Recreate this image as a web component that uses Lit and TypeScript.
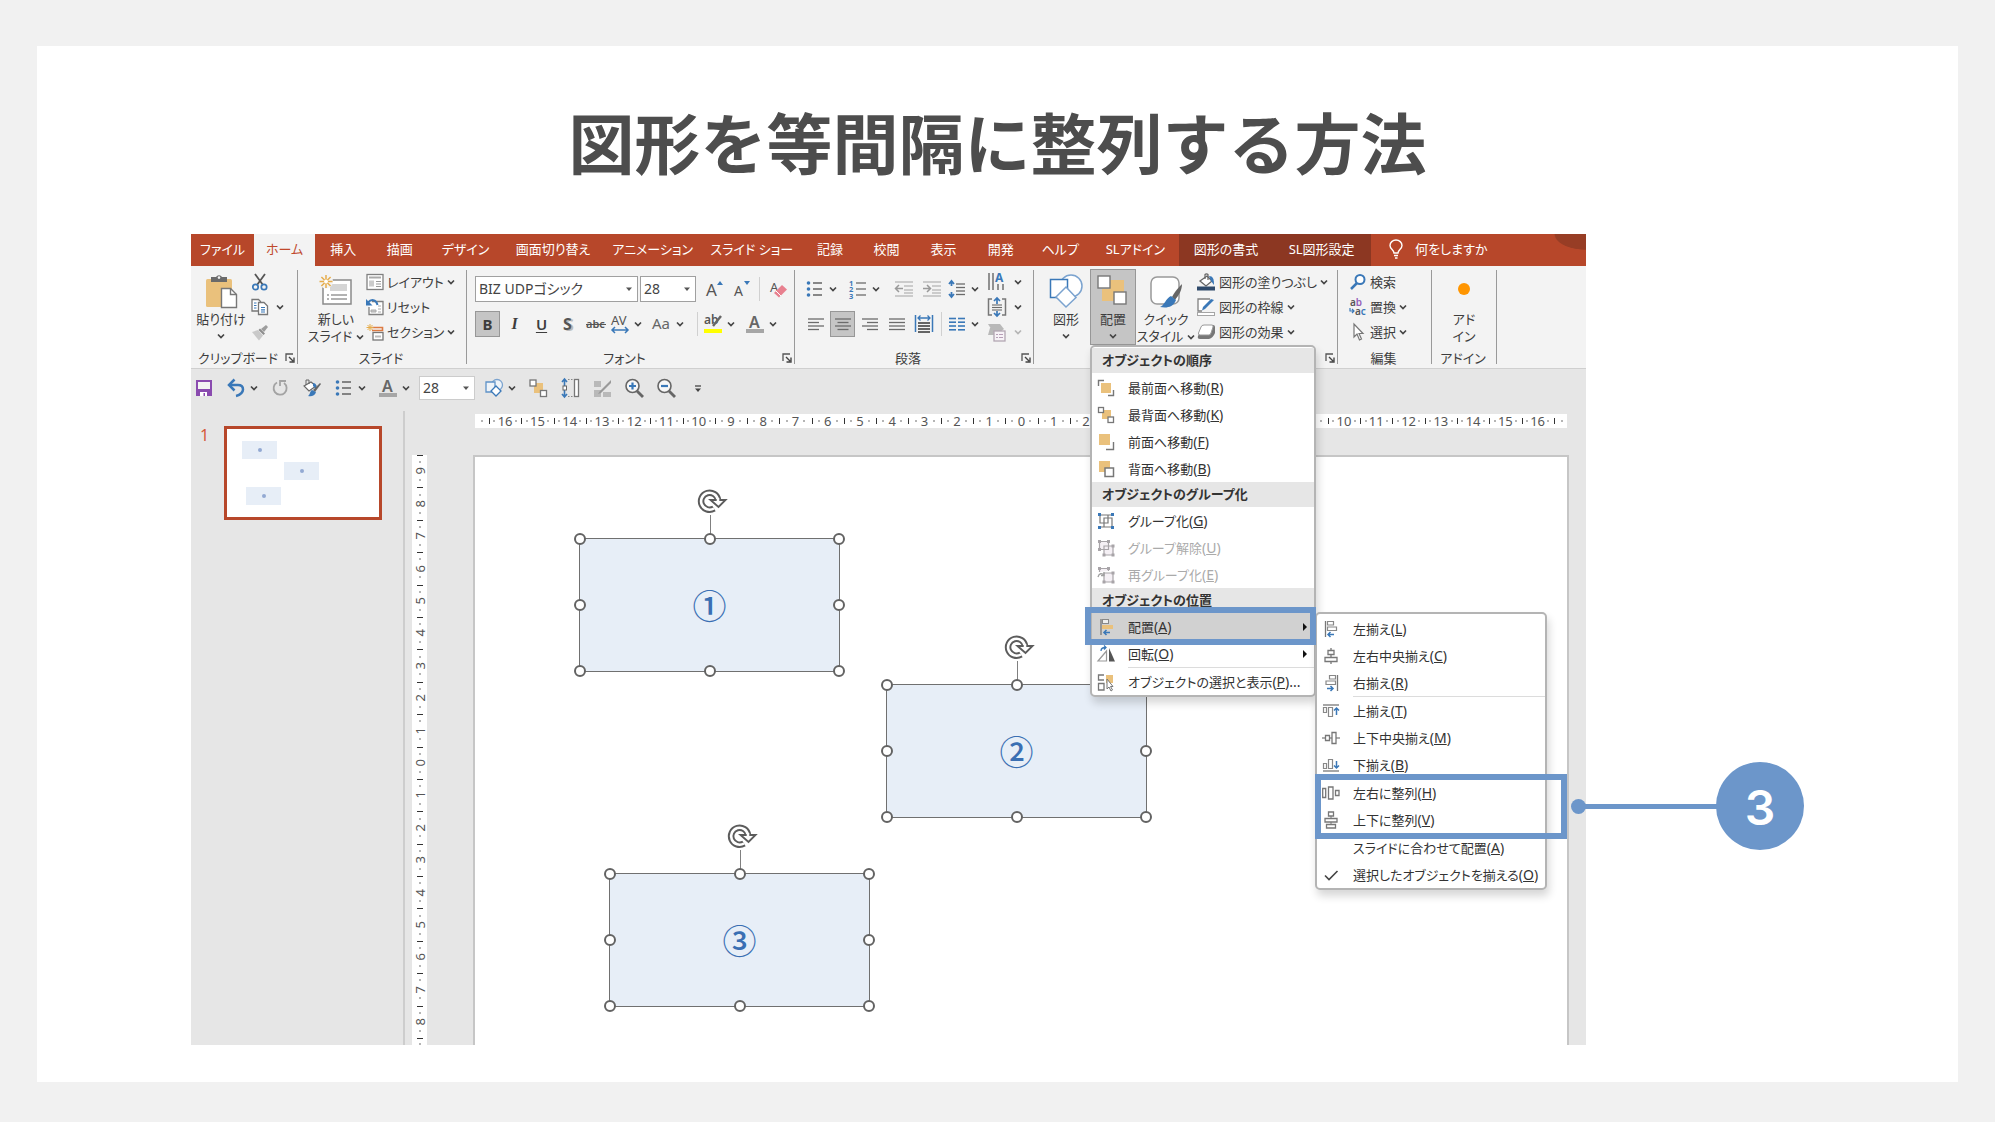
import { LitElement, html, css, svg, nothing, TemplateResult, SVGTemplateResult } from "lit";
import { customElement, property } from "lit/decorators.js";
import { classMap } from "lit/directives/class-map.js";

const G = "#6b6b6b";
const B = "#3a78b8";
const T = "#eac17c";

/* Horizontal strokes, given as [x1, x2, y] triples. */
const bars = (color: string, rows: number[][], w = 1.6) =>
  rows.map(([a, b, y]) => svg`<path d="M${a} ${y}H${b}" stroke=${color} stroke-width=${w} fill="none"/>`);

const art: Record<string, [number, number, SVGTemplateResult | SVGTemplateResult[]]> = {
  paste: [34, 34, svg`
    <rect x="2" y="5" width="26" height="28" rx="1.5" fill=${T}/>
    <path d="M7 3h5a3.4 3.4 0 0 1 6 0h5v5H7z" fill="#6a6a6a"/><circle cx="15" cy="3.6" r="1.3" fill="#f3f3f3"/>
    <path d="M17.500 14.500h9l6 6v13h-15z" fill="#fff" stroke="#777" stroke-width="1.4"/>
    <path d="M26.500 14.500v6h6" fill="none" stroke="#777" stroke-width="1.400"/>`],
  cut: [18, 18, svg`
    <path d="M4 1l8 11M14 1L6 12" stroke="#555" stroke-width="1.8" fill="none"/>
    <circle cx="4.500" cy="14" r="2.7" fill="none" stroke=${B} stroke-width="1.700"/>
    <circle cx="13" cy="14" r="2.700" fill="none" stroke=${B} stroke-width="1.700"/>`],
  copy: [18, 18, svg`
    <path d="M1 1.500h6.500l2 2V13H1z" fill="#fff" stroke="#777" stroke-width="1.300"/>
    <path d="M7.500 4.500H13l3.500 3.500v8.500h-9z" fill="#fff" stroke="#777" stroke-width="1.300"/>
    <path d="M3 5h2.500M3 7.500h2.500M3 10h2.500M10 9.500h4M10 11.800h4M10 14h4" stroke=${B} stroke-width="1.200"/>`],
  brush: [18, 18, svg`
    <path d="M10 6l5-4 2 2-4 5z" fill="#9d9d9d"/><path d="M9 5.500l5 5-1.500 1.500-5-5z" fill="#8d8d8d"/>
    <path d="M1 9l6-2 5 5.500-4 5z" fill="#c9c9c9"/>`],
  newslide: [34, 34, svg`
    <rect x="4" y="6" width="28" height="24" fill="#fff" stroke="#8a8a8a" stroke-width="1.500"/>
    <rect x="11" y="10" width="17" height="7" fill="#d5d5d5"/>
    <path d="M8 21h2M12 21h16M8 25h2M12 25h16" stroke="#999" stroke-width="1.300"/>
    <circle cx="7" cy="7.500" r="7" fill="#f3f3f3"/>
    <path d="M7 1v13M.5 7.500h13M2.400 3l9.200 9M11.600 3L2.400 12" stroke="#e6ad4c" stroke-width="1.500"/>
    <circle cx="7" cy="7.500" r="2" fill="#fff"/>`],
  layout: [18, 18, svg`
    <rect x="1" y="1.500" width="16" height="15" fill="#fff" stroke="#808080" stroke-width="1.300"/>
    <path d="M3 4.500h12" stroke="#aaa" stroke-width="2"/><rect x="3" y="7.500" width="5" height="6" fill="#ccc"/>
    <path d="M10 8.500h5M10 11h5M10 13.500h5" stroke="#999"/>`],
  reset: [18, 18, svg`
    <path d="M6 3.500h11v13H3V9" fill="#fff" stroke="#808080" stroke-width="1.300"/>
    <path d="M5 12h5v2H5zM12 8h3M12 11h3M12 14h3" stroke="#aaa" fill="#ccc"/>
    <path d="M2 4.500c3-3.500 8-3.500 9.500 2.500" stroke=${B} stroke-width="2" fill="none"/><path d="M0 1v6.500h6.500z" fill=${B}/>`],
  section: [18, 18, svg`
    <path d="M6 4.500h10.500v3H6" stroke="#dd7b43" stroke-width="1.600" fill="none"/>
    <rect x="7" y="9.500" width="10" height="7.500" fill="#fff" stroke="#777" stroke-width="1.300"/>
    <path d="M9 12.500h6v2H9z" fill="#bbb"/><path d="M4 1v7M.5 4.500h7M1.500 2l5 5M6.500 2l-5 5" stroke="#e6ad4c"/>`],
  grow: [20, 20, svg`<text x="1" y="17" font-size="17" fill="#555">A</text><path d="M12 6l3-4 3 4z" fill=${B}/>`],
  shrink: [20, 20, svg`<text x="2" y="17" font-size="14" fill="#555">A</text><path d="M12 2l3 4 3-4z" fill=${B}/>`],
  eraser: [20, 20, svg`<text x="2" y="13" font-size="13" fill="#555">A</text>
    <path d="M6 14l8-8 5 4.500-8 8z" fill="#e8808f"/><path d="M8 12l5 5" stroke="#fff"/>`],
  shadow: [20, 20, svg`<text x="6" y="17" font-size="16" font-weight="700" fill="#bbb">S</text><text x="4" y="16" font-size="16" font-weight="700" fill="#555">S</text>`],
  strike: [20, 20, svg`<text x="0" y="14" font-size="11" font-weight="600" fill="#555">abc</text><path d="M0 10.500h20" stroke="#555"/>`],
  spacing: [20, 20, svg`<text x="1" y="11" font-size="13" fill="#555">AV</text>
    <path d="M3 16h14M5 13l-3 3 3 3M15 13l3 3-3 3" stroke=${B} stroke-width="1.500" fill="none"/>`],
  caseAa: [20, 20, svg`<text x="0" y="15" font-size="15" fill="#666">Aa</text>`],
  marker: [20, 20, svg`<text x="1" y="10" font-size="12" font-weight="600" fill="#555">ab</text>
    <path d="M18 2l-8 10" stroke="#666" stroke-width="2.400"/><rect x="1" y="15" width="18" height="4" fill="#ffff00"/>`],
  fontcolor: [20, 20, svg`<text x="4" y="14" font-size="16" font-weight="600" fill="#666">A</text><rect x="1" y="15" width="18" height="4" fill="#a6a6a6"/>`],
  bullets: [20, 20, svg`<g fill=${B}><circle cx="3.500" cy="4" r="1.800"/><circle cx="3.500" cy="10" r="1.800"/><circle cx="3.500" cy="16" r="1.800"/></g>
    ${bars(G, [[8, 17, 4], [8, 17, 10], [8, 17, 16]])}`],
  numbers: [20, 20, svg`<g fill=${B} font-size="7.500" font-weight="700"><text x="1" y="6.500">1</text><text x="1" y="13">2</text><text x="1" y="19.500">3</text></g>
    ${bars(G, [[8, 18, 4], [8, 18, 10], [8, 18, 16]], 1.3)}`],
  outdent: [20, 20, svg`${bars("#b5b5b5", [[1, 19, 3], [10, 19, 7], [10, 19, 11], [10, 19, 14], [1, 19, 17]], 1.3)}
    <path d="M9 9.500H2M5 6L1.500 9.500 5 13" stroke="#999" stroke-width="1.500" fill="none"/>`],
  indent: [20, 20, svg`${bars("#b5b5b5", [[1, 19, 3], [10, 19, 7], [10, 19, 11], [10, 19, 14], [1, 19, 17]], 1.3)}
    <path d="M1 9.500h7M5 6l3.500 3.500L5 13" stroke="#999" stroke-width="1.500" fill="none"/>`],
  linespace: [20, 20, svg`${bars(G, [[9, 18, 5], [9, 18, 8.5], [9, 18, 12], [9, 18, 15.500]], 1.3)}
    <path d="M4.500 3v4M4.500 13v4M2 5l2.500-3L7 5M2 15l2.500 3L7 15" stroke=${B} stroke-width="1.800" fill="none"/>`],
  left: [20, 20, bars(G, [[2, 18, 5], [2, 13, 8.5], [2, 18, 12], [2, 13, 15.500]], 1.3)],
  center: [20, 20, bars(G, [[2, 18, 5], [4.5, 15.5, 8.5], [2, 18, 12], [4.5, 15.5, 15.500]], 1.3)],
  right: [20, 20, bars(G, [[2, 18, 5], [7, 18, 8.5], [2, 18, 12], [7, 18, 15.500]], 1.3)],
  justify: [20, 20, bars(G, [[2, 18, 5], [2, 18, 8.5], [2, 18, 12], [2, 18, 15.500]], 1.3)],
  distribute: [20, 20, svg`<path d="M1.500 1v17M18.500 1v17" stroke=${B} stroke-width="1.500"/>
    <path d="M4 4h12M6.500 1.500L4 4l2.500 2.500M13.500 1.500L16 4l-2.500 2.500" stroke=${B} stroke-width="1.300" fill="none"/>
    ${bars("#555", [[4, 16, 9], [4, 16, 12], [4, 16, 15], [4, 16, 18]], 1.800)}`],
  columns: [20, 20, bars(B, [[2, 9, 4.5], [11, 18, 4.5], [2, 9, 8.2], [11, 18, 8.2], [2, 9, 12], [11, 18, 12], [2, 9, 15.800], [11, 18, 15.800]], 1.600)],
  textdir: [20, 20, svg`<path d="M2 1v17M6 1v17M11 12v6M16 12v6" stroke="#666" stroke-width="1.400"/><text x="8" y="10" font-size="12" font-weight="700" fill=${B}>A</text>`],
  aligntext: [20, 20, svg`<path d="M5 2H1.500v16H5M15 2h3.500v16H15" fill="none" stroke="#777" stroke-width="1.500"/>
    ${bars(G, [[5, 15, 8], [5, 15, 10.500], [5, 15, 13]], 1.100)}
    <path d="M10 1v6M7 4l3-3 3 3M10 14v5M7 16l3 3 3-3" stroke=${B} stroke-width="1.700" fill="none"/>`],
  smartart: [20, 20, svg`<path d="M1 2h12l4 5-4 3H6z" fill="#b9b9b9"/><path d="M3 6h5v7H1z" fill="#b9b9b9"/><rect x="7" y="9" width="11" height="10" fill="#f7f2f7" stroke="#b3a6b3" stroke-width="1.300"/>
    <path d="M9 12.500h2M12 12.500h4M9 15.500h2M12 15.500h4" stroke="#b79fb7"/>`],
  shapes: [34, 34, svg`<circle cx="22" cy="12" r="11" fill="#fff" stroke="#7ba3cf" stroke-width="1.500"/>
    <rect x="1.500" y="5.500" width="17" height="18" fill="#fff" stroke=${B} stroke-width="1.500"/>
    <path d="M17 13l10 10.500L17 33 7 23z" fill="#fff" stroke="#7ba3cf" stroke-width="1.500"/>`],
  arrange: [34, 34, svg`<rect x="13" y="6" width="15" height="15" fill=${T}/><rect x="6" y="15" width="12" height="12" fill=${T}/>
    <rect x="2" y="2" width="12" height="12" fill="#fff" stroke="#777" stroke-width="1.400"/>
    <rect x="18" y="18" width="12" height="12" fill="#fff" stroke="#777" stroke-width="1.400"/>`],
  quick: [34, 34, svg`<rect x="2" y="3" width="28" height="27" rx="6" fill="#fff" stroke="#999" stroke-width="1.500"/>
    <path d="M33 10c-2 2-7 7-10 13l3 3c4-5 7-10 7-16z" fill="#666"/><path d="M22 22l5 4c-3 8-10 8-16 7 4-1 6-9 11-11z" fill=${B}/>`],
  fill: [20, 20, svg`<path d="M4 9l7-5 5 5-6 5z" fill="#fff" stroke="#666" stroke-width="1.300"/><path d="M9 7V2.500a2 2 0 0 1 3 0V8" fill="none" stroke="#666" stroke-width="1.200"/>
    <path d="M13 4c4 0 5 3 5 9l-3-4z" fill=${B}/><rect x="1" y="14.500" width="18" height="4" fill="#2f4a6b"/>`],
  outline: [20, 20, svg`<path d="M14 2H2v12h4" fill="#fff" stroke="#808080" stroke-width="1.300"/><path d="M18 3l-9 9-3 1.500 1-3.500 8-8z" fill=${B}/>
    <rect x="1.500" y="15.500" width="17" height="3" fill="#fff" stroke="#a5a5a5"/>`],
  effect: [20, 20, svg`<path d="M8 3h9q2 0 2 2v6q-2 5-6 6H4q-3 0-2-3z" fill="#777"/><path d="M8 3h8q1.500 0 1 2l-2 6q-.5 2-2 2H4q-2 0-1.500-2L5 5q.5-2 3-2z" fill="#fff" stroke="#999"/>`],
  find: [18, 18, svg`<circle cx="11" cy="6.500" r="4.500" fill="#fff" stroke=${B} stroke-width="2"/><path d="M8 10l-6 6" stroke=${B} stroke-width="2.500"/>`],
  replace: [18, 18, svg`<text x="1" y="8" font-size="10" font-weight="600" fill="#555">a<tspan fill="#9460b8">b</tspan></text>
    <text x="6" y="17" font-size="10" font-weight="600" fill="#555">a<tspan fill=${B}>c</tspan></text><path d="M1 10v3h4M3 11l2 2-2 2" stroke=${B} stroke-width="1.200" fill="none"/>`],
  select: [18, 18, svg`<path d="M5 1v13l3-3 2.500 6 2-1-2.500-5.500h4z" fill="#fff" stroke="#777" stroke-width="1.200"/>`],
  addin: [34, 34, svg`<circle cx="17" cy="15" r="6" fill="#ff9500"/>`],
  bulb: [18, 20, svg`<path d="M7 14c0-3-4-4-4-7.500a6 5.500 0 0 1 12 0c0 3.500-4 4.500-4 7.500zM7 16.500h4M8 19h2.500" fill="none" stroke="#fff" stroke-width="1.400"/>`],
  save: [20, 20, svg`<path d="M3 3h14v14H3z" fill="#f3f3f3" stroke="#8a4baf" stroke-width="2"/><path d="M3 11h14v6H3z" fill="#8a4baf"/><path d="M6 14h7v4H6z" fill="#fff"/><path d="M9.500 15h1.500v3H9.500z" fill="#8a4baf"/>`],
  undo: [20, 20, svg`<path d="M3 7h9c4 0 5 2.500 5 4.500S15 17 10 18" fill="none" stroke=${B} stroke-width="2.500"/><path d="M8.500 1.500L3 7l5.500 5.500" fill="none" stroke=${B} stroke-width="2.500"/>`],
  redo: [20, 20, svg`<path d="M7 4.500a6.500 6.500 0 1 0 7 .5M10 2v6M10 3h6" fill="none" stroke="#a3a3a3" stroke-width="1.800"/>`],
  paint: [20, 20, svg`<path d="M2 8l7-4 5 4-7 5z" fill="#fff" stroke="#666" stroke-width="1.200"/><path d="M4 7V2h3v4" fill="none" stroke="#666"/>
    <path d="M11 5c3 0 4 3 3 6l-3-3z" fill=${B}/><path d="M19 6l-6 8-2-2 7-7z" fill="#666"/><path d="M10 12l4 2c-1 4-5 5-8 4 2-1 2-5 4-6z" fill=${B}/>`],
  shapesS: [20, 20, svg`<circle cx="13" cy="7" r="5.500" fill="#eef3f8" stroke="#7ba3cf" stroke-width="1.300"/><path d="M2 4h9v10H2z" fill="#eef3f8" stroke="#5f93c8" stroke-width="1.300"/>
    <path d="M12 8l5 5-5 5-5-5z" fill="#fff" stroke=${B} stroke-width="1.300"/>`],
  arrangeS: [20, 20, svg`<rect x="6" y="5" width="9" height="10" fill=${T}/><rect x="2" y="2" width="6" height="6" fill="#fff" stroke="#777" stroke-width="1.300"/><rect x="12.500" y="12.500" width="6" height="6" fill="#fff" stroke="#777" stroke-width="1.300"/>`],
  heightS: [20, 20, svg`<path d="M4.500 1v18M2 4l2.500-3L7 4M2 16l2.500 3L7 16" stroke=${B} stroke-width="1.600" fill="none"/><rect x="3" y="8" width="3.500" height="4" fill="#fff" stroke="#666"/>
    <path d="M8 1.500h6M8 18.500h6" stroke="#888" stroke-dasharray="1.500"/><rect x="14.500" y="1.500" width="4" height="17" fill="#fff" stroke="#777" stroke-width="1.300"/>`],
  penS: [20, 20, svg`<path d="M2 3h7v6H2zM2 12h7v7H2zM11 14h8v5h-8z" fill="#b9b9b9"/><path d="M19 2L8 13l-2 3 3-1L19 5z" fill="#9a9a9a"/>`],
  zoomIn: [20, 20, svg`<circle cx="8.500" cy="8" r="6.500" fill="#f7f7f7" stroke="#666" stroke-width="1.600"/><path d="M13 13l6 6" stroke="#666" stroke-width="2.800"/><path d="M8.500 4.500v7M5 8h7" stroke=${B} stroke-width="2.200"/>`],
  zoomOut: [20, 20, svg`<circle cx="8.500" cy="8" r="6.500" fill="#f7f7f7" stroke="#666" stroke-width="1.600"/><path d="M13 13l6 6" stroke="#666" stroke-width="2.800"/><path d="M5 8h7" stroke=${B} stroke-width="2.200"/>`],
  more: [20, 20, svg`<path d="M7 8h6" stroke="#444" stroke-width="1.300"/><path d="M7 10.500h6l-3 3.500z" fill="#444"/>`],
  launcher: [10, 10, svg`<path d="M1 8V1h7" fill="none" stroke="#555" stroke-width="1.300"/><path d="M4 4l4 4M9 4.500V9H4.500" fill="none" stroke="#444" stroke-width="1.400"/>`],
  chev: [8, 8, svg`<path d="M1 2.500l3 3 3-3" fill="none" stroke="#444" stroke-width="1.700"/>`],
  chevOff: [8, 8, svg`<path d="M1 2.500l3 3 3-3" fill="none" stroke="#b5b5b5" stroke-width="1.700"/>`],
  drop: [8, 8, svg`<path d="M1 2.500h6l-3 3.500z" fill="#555"/>`],
  flyout: [8, 10, svg`<path d="M2 1l4 4-4 4z" fill="#111"/>`],
  toFront: [18, 18, svg`<rect x="4" y="4" width="10" height="10" fill=${T}/><path d="M1.500 7V1.500H7M16.500 11v5.500H11" fill="none" stroke="#777" stroke-width="1.400"/>`],
  toBack: [18, 18, svg`<rect x="5" y="4" width="9" height="9" fill=${T}/><rect x="1.500" y="1.500" width="5" height="5" fill="#fff" stroke="#777" stroke-width="1.300"/><rect x="11" y="11" width="5.500" height="5.500" fill="#fff" stroke="#777" stroke-width="1.300"/>`],
  forward: [18, 18, svg`<rect x="2" y="1" width="11" height="11" fill=${T}/><path d="M16.500 9v7.500H9" fill="none" stroke="#777" stroke-width="1.400"/>`],
  backward: [18, 18, svg`<rect x="2" y="1" width="11" height="11" fill=${T}/><rect x="8" y="8" width="8.500" height="8.500" fill="#fff" stroke="#777" stroke-width="1.500"/>`],
  group: [18, 18, svg`<path d="M3 3h8v8H3zM7 6h8v9H7zM3 3h12M3 15h12" fill="none" stroke="#777" stroke-width="1.200"/>
    <g fill=${B}><rect x="1" y="1" width="3" height="3"/><rect x="14" y="1" width="3" height="3"/><rect x="1" y="14" width="3" height="3"/><rect x="14" y="14" width="3" height="3"/></g>`],
  ungroup: [18, 18, svg`<path d="M2.500 2.500h9v8h-9zM7 7h9v9H7z" fill="#f5f0f5" stroke="#a8a4a8" stroke-width="1.200"/>
    <g fill="#a8a4a8"><rect x="1" y="1" width="3" height="3"/><rect x="10" y="1" width="3" height="3"/><rect x="1" y="9" width="3" height="3"/><rect x="14.500" y="5.500" width="3" height="3"/><rect x="5.500" y="14.500" width="3" height="3"/><rect x="14.500" y="14.500" width="3" height="3"/></g>`],
  regroup: [18, 18, svg`<path d="M2.500 6V2.500h9V5M7 7h9v9H7z" fill="#f5f0f5" stroke="#a8a4a8" stroke-width="1.200"/><path d="M1 11c1-4 4-4 6-2M7 6v3.500H4" fill="none" stroke="#a0a0a0" stroke-width="1.300"/>
    <g fill="#a8a4a8"><rect x="1" y="1" width="3" height="3"/><rect x="10" y="1" width="3" height="3"/><rect x="14.500" y="5.500" width="3" height="3"/><rect x="5.500" y="14.500" width="3" height="3"/><rect x="14.500" y="14.500" width="3" height="3"/></g>`],
  alignTan: [18, 18, svg`<path d="M4 1v16" stroke="#777" stroke-width="1.300"/><rect x="5.500" y="1.500" width="6" height="4" fill="#eee" stroke="#888"/><rect x="5" y="7" width="11" height="4" fill=${T}/><path d="M13 14.500H7M9.500 12L7 14.500 9.500 17" stroke=${B} stroke-width="1.600" fill="none"/>`],
  rotate: [18, 18, svg`<path d="M9.500 6v10H1z" fill="#fff" stroke="#999" stroke-width="1.200"/><path d="M12 3v13.500h6z" fill="#555"/><path d="M4 6c0-3 2-3.500 4.500-3.500M7 .5l2 2-2 2" fill="none" stroke=${B} stroke-width="1.300"/>`],
  selPane: [18, 18, svg`<rect x="9" y="2" width="7" height="8" fill=${T}/><path d="M7 2H1.500v5H7M1.500 10.500H7V17H1.500z" fill="#fff" stroke="#777" stroke-width="1.300"/><path d="M10 6v10l2-2 2 4 1.500-1-2-3.500H16z" fill="#fff" stroke="#777"/>`],
  aLeft: [18, 18, svg`<path d="M3.500 1v16" stroke="#777" stroke-width="1.300"/><path d="M5.500 1.500h6v3.500h-6zM5.500 7h9v3.500h-9z" fill="#fff" stroke="#888" stroke-width="1.200"/><path d="M12 14.500H6M8.500 12L6 14.500 8.500 17" stroke=${B} stroke-width="1.500" fill="none"/>`],
  aCenter: [18, 18, svg`<path d="M9 1v16" stroke="#777" stroke-width="1.300"/><path d="M6 3.500h6v4H6zM3 10.500h12v4H3z" fill="#fff" stroke="#777" stroke-width="1.300"/>`],
  aRight: [18, 18, svg`<path d="M15.500 1v16" stroke="#777" stroke-width="1.300"/><path d="M7.500 1.500h6v3.500h-6zM4 7h9.500v3.500H4z" fill="#fff" stroke="#888" stroke-width="1.200"/><path d="M5 14.500h6M8.500 12l2.500 2.500L8.500 17" stroke=${B} stroke-width="1.500" fill="none"/>`],
  aTop: [18, 18, svg`<path d="M1 3h16" stroke="#777" stroke-width="1.300"/><path d="M1.500 5.500h3v5h-3zM6.500 5.500h4v9h-4z" fill="#fff" stroke="#888" stroke-width="1.200"/><path d="M14.500 13V6M12 8.500L14.500 6 17 8.500" stroke=${B} stroke-width="1.500" fill="none"/>`],
  aMiddle: [18, 18, svg`<path d="M0 9h18" stroke="#777" stroke-width="1.200"/><path d="M3.500 6.500h4v5h-4zM10 3.500h4v11h-4z" fill="#fff" stroke="#777" stroke-width="1.300"/>`],
  aBottom: [18, 18, svg`<path d="M1 15h16" stroke="#777" stroke-width="1.300"/><path d="M1.500 7.500h3v5h-3zM6.500 3.500h4v9h-4z" fill="#fff" stroke="#888" stroke-width="1.200"/><path d="M14.500 5v7M12 9.500l2.500 2.500L17 9.500" stroke=${B} stroke-width="1.500" fill="none"/>`],
  dHoriz: [18, 18, svg`<path d="M.7 4.500h3v9h-3zM6.500 3h4.500v12H6.500zM13.500 6.500h3.500v5h-3.500z" fill="#fff" stroke="#777" stroke-width="1.300"/>`],
  dVert: [18, 18, svg`<path d="M6.500 1h5v4h-5zM3 7.500h12v3.500H3zM4.500 13.500h9V17h-9z" fill="#fff" stroke="#777" stroke-width="1.300"/><path d="M9 5v2.500M9 11v2.500" stroke="#777"/>`],
  check: [18, 18, svg`<path d="M3 9.500l4 4L15.500 5" fill="none" stroke="#444" stroke-width="1.600"/>`],
  none: [18, 18, svg``],
};

const icon = (name: string): TemplateResult => {
  const [w, h, body] = art[name];
  return html`<svg class="icon" width=${w} height=${h} viewBox="0 0 ${w} ${h}" aria-hidden="true">${body}</svg>`;
};

const sheet = css`
  * { box-sizing: border-box; }
  button, select {
    font: inherit; color: inherit; margin: 0; padding: 0; border: 0; background: none;
    font-feature-settings: inherit; white-space: nowrap;
  }
  .icon { display: block; flex: none; overflow: visible; }
`;

interface Entry { icon: string; label: string; key: string; tail?: string; fly?: boolean; off?: boolean; on?: boolean; }

@customElement("menu-row")
class MenuRow extends LitElement {
  @property({ attribute: false }) entry!: Entry;
  static styles = [sheet, css`
    :host { display: block; }
    .row { display: flex; align-items: center; width: 100%; height: 27px; padding: 0 5px; text-align: left; color: #333; }
    .text { flex: 1; padding-left: 13px; }
    .key { font-size: 14px; }
    .off { color: #aaa; }
    .on { background: #d1d1d1; }
  `];
  render() {
    const e = this.entry;
    return html`<button class=${classMap({ row: true, off: !!e.off, on: !!e.on })} ?disabled=${!!e.off}>
      ${icon(e.icon)}<span class="text">${e.label}<span class="key">(<u>${e.key}</u>)${e.tail ?? ""}</span></span>
      ${e.fly ? icon("flyout") : nothing}
    </button>`;
  }
}

const row = (icon: string, label: string, key: string, more: Partial<Entry> = {}) =>
  html`<menu-row .entry=${{ icon, label, key, ...more }}></menu-row>`;

@customElement("arrange-menu")
class ArrangeMenu extends LitElement {
  static styles = [sheet, css`
    :host { position: absolute; top: 100%; left: 0; z-index: 5; display: block; }
    .menu {
      width: 226px; padding-top: 1px; background: #fff; border: 2px solid #b4b4b4; border-radius: 5px;
      box-shadow: 2px 6px 8px rgba(0, 0, 0, .16);
    }
    .head { height: 25px; padding-left: 10px; line-height: 25px; font-size: 13px; font-weight: 700; color: #333; background: #e6e6e6; }
    .first { margin-bottom: 1px; }
    .rule { height: 1px; margin-left: 36px; background: #dcdcdc; }
    .align { position: relative; }
    .ring, .focus::after { content: ""; position: absolute; border: 6px solid #6c96ca; z-index: 2; pointer-events: none; }
    .ring { inset: -6px -2px -5px -7px; }
    .sub { position: absolute; top: -1px; left: 100%; width: 232px; margin-left: 1px; }
    .focus { position: relative; }
    .focus::after { inset: -5px -22px -6px -2px; }
    .callout { position: absolute; left: 100%; top: -17px; margin-left: 26px; display: flex; align-items: center; z-index: 3; }
    .dot { width: 15px; height: 15px; border-radius: 50%; background: #6c96ca; }
    .line { width: 134px; height: 5px; margin-left: -2px; background: #6c96ca; }
    .num {
      width: 88px; height: 88px; margin-left: -2px; border-radius: 50%; background: #6c96ca; color: #fff;
      font: 600 48px/92px Inter, "Liberation Sans", sans-serif; text-align: center;
    }
  `];
  render() {
    return html`<div class="menu" role="menu">
      <div class="head first">オブジェクトの順序</div>
      ${row("toFront", "最前面へ移動", "R")}
      ${row("toBack", "最背面へ移動", "K")}
      ${row("forward", "前面へ移動", "F")}
      ${row("backward", "背面へ移動", "B")}
      <div class="head">オブジェクトのグループ化</div>
      ${row("group", "グループ化", "G")}
      ${row("ungroup", "グループ解除", "U", { off: true })}
      ${row("regroup", "再グループ化", "E", { off: true })}
      <div class="head">オブジェクトの位置</div>
      <div class="align">
        ${row("alignTan", "配置", "A", { fly: true, on: true })}
        <div class="ring"></div>
        <div class="menu sub" role="menu">
          ${row("aLeft", "左揃え", "L")}
          ${row("aCenter", "左右中央揃え", "C")}
          ${row("aRight", "右揃え", "R")}
          <div class="rule"></div>
          ${row("aTop", "上揃え", "T")}
          ${row("aMiddle", "上下中央揃え", "M")}
          ${row("aBottom", "下揃え", "B")}
          <div class="rule"></div>
          <div class="focus">
            ${row("dHoriz", "左右に整列", "H")}
            ${row("dVert", "上下に整列", "V")}
            <div class="callout"><span class="dot"></span><span class="line"></span><span class="num">3</span></div>
          </div>
          <div class="rule"></div>
          ${row("none", "スライドに合わせて配置", "A")}
          ${row("check", "選択したオブジェクトを揃える", "O")}
        </div>
      </div>
      ${row("rotate", "回転", "O", { fly: true })}
      <div class="rule"></div>
      ${row("selPane", "オブジェクトの選択と表示", "P", { tail: "..." })}
    </div>`;
  }
}

@customElement("office-ribbon")
class OfficeRibbon extends LitElement {
  static styles = [sheet, css`
    :host { display: block; color: #3d3d3d; }
    .tabs {
      display: grid; height: 32px; color: #fff; background: #b7472a;
      grid-template-columns: 63fr 61fr 56fr 57fr 74fr 101fr 98fr 100fr 56fr 57fr 57fr 57fr 62fr 88fr 93fr 98fr 133fr 82fr;
    }
    .tab { display: flex; align-items: center; justify-content: center; gap: 10px; min-width: 0; padding-bottom: 2px; }
    .active { background: #f3f3f3; color: #c0492c; }
    .context { background: #8c3722; }
    .corner { background: radial-gradient(ellipse 32px 16px at 100% 0, #973d25 96%, transparent); }
    .groups {
      display: grid; height: 103px; background: #f3f3f3; border-bottom: 1px solid #cfcfcf;
      grid-template-columns: 107fr 169fr 328fr 239fr 304fr 94fr 65fr 89fr;
    }
    .group { display: flex; flex-direction: column; min-width: 0; padding-top: 3px; background: linear-gradient(#999, #999) right 0 top 4px / 1px 94px no-repeat; }
    .body { display: flex; flex: 1; align-items: flex-start; padding: 0 8px; }
    .foot { display: flex; align-items: center; justify-content: center; height: 20px; padding-right: 3px; }
    .foot span { flex: 1; text-align: center; }
    .big { display: flex; flex-direction: column; align-items: center; height: 76px; padding: 4px 0 0; line-height: 17px; border: 1px solid transparent; }
    .big .icon { margin-bottom: 3px; }
    .big .line { display: flex; align-items: center; height: 17px; gap: 4px; }
    .big .line .icon { margin: 0; }
    .w46 { width: 46px; }
    .w48 { width: 48px; }
    .w60 { width: 60px; }
    .flush { margin-left: -8px; }
    .pressed { background: #c5c5c5; border: 1px solid #979797; }
    .host { position: relative; }
    .stack { display: flex; flex-direction: column; }
    .stack button { display: flex; align-items: center; gap: 3px; height: 25px; }
    .stack .icon + .icon { margin-left: 4px; }
    .inset { padding-left: 3px; }
    .rows { display: flex; flex-direction: column; gap: 9px; padding-top: 7px; }
    .line2 { display: flex; align-items: center; gap: 2px; height: 26px; }
    .loose { gap: 3px; padding-left: 2px; }
    .sq { display: flex; align-items: center; justify-content: center; width: 25px; height: 26px; border: 1px solid transparent; font-size: 15px; }
    .wide { display: flex; align-items: center; gap: 4px; width: 40px; height: 26px; }
    .on { background: #c5c5c5; border-color: #979797; }
    .bar { width: 1px; height: 24px; margin: 0 3px; background: #d0d0d0; }
    .combo { position: relative; display: flex; align-items: center; height: 26px; background: #fff; border: 1px solid #a0a0a0; }
    .combo select { width: 100%; height: 100%; padding-left: 3px; appearance: none; font-size: 14px; color: #444; }
    .combo .icon { position: absolute; right: 4px; pointer-events: none; }
    .name { width: 163px; }
    .size { width: 56px; margin-right: 4px; }
    .quickbar { display: flex; align-items: center; gap: 9px; height: 38px; padding-left: 3px; }
    .set { display: flex; align-items: center; gap: 12px; }
    .set button { display: flex; align-items: center; gap: 4px; }
    .quickbar .size { height: 24px; margin: 0; border-color: #ccc; }
    .b { font-weight: 700; }
    .i { font-family: "Liberation Serif", serif; font-style: italic; font-weight: 700; font-size: 16px; }
    .u { font-weight: 600; text-decoration: underline; text-underline-offset: 2px; }
  `];

  private tabs = ["ファイル", "ホーム", "挿入", "描画", "デザイン", "画面切り替え", "アニメーション", "スライド ショー", "記録", "校閲", "表示", "開発", "ヘルプ", "SLアドイン", "図形の書式", "SL図形設定"];

  private sq(name: string, label: string, on = false) {
    return html`<button class=${classMap({ sq: true, on })} aria-label=${label}>${icon(name)}</button>`;
  }
  private wide(name: string, label: string) {
    return html`<button class="wide" aria-label=${label}>${icon(name)}${icon("chev")}</button>`;
  }
  private small(name: string, label: string, chev = "") {
    return html`<button>${icon(name)}${label ? html`<span>${label}</span>` : nothing}${chev ? icon(chev) : nothing}</button>`;
  }
  private big(name: string, cls: string, one: string, two: string, chev = true) {
    return html`<button class="big ${cls}">${icon(name)}<span class="line">${one}</span><span class="line">${two}${chev ? icon("chev") : nothing}</span></button>`;
  }
  private group(label: string, body: TemplateResult, launcher = false) {
    return html`<section class="group"><div class="body">${body}</div>
      <div class="foot"><span>${label}</span>${launcher ? html`<button aria-label="${label}の詳細">${icon("launcher")}</button>` : nothing}</div></section>`;
  }
  private combo(cls: string, value: string, label: string) {
    return html`<label class="combo ${cls}"><select aria-label=${label}><option>${value}</option></select>${icon("drop")}</label>`;
  }
  private quick(name: string, label: string, chev = false) {
    return html`<button aria-label=${label}>${icon(name)}${chev ? icon("chev") : nothing}</button>`;
  }

  render() {
    return html`
      <nav class="tabs">
        ${this.tabs.map((t, i) => html`<button class=${classMap({ tab: true, active: i === 1, context: i > 13 })}>${t}</button>`)}
        <button class="tab">${icon("bulb")}何をしますか</button>
        <span class="corner"></span>
      </nav>
      <div class="groups">
        ${this.group("クリップボード", html`
          ${this.big("paste", "w60 flush", "貼り付け", "")}
          <div class="stack">${this.small("cut", "")}${this.small("copy", "", "chev")}${this.small("brush", "")}</div>`, true)}
        ${this.group("スライド", html`
          ${this.big("newslide", "w60", "新しい", "スライド")}
          <div class="stack">${this.small("layout", "レイアウト", "chev")}${this.small("reset", "リセット")}${this.small("section", "セクション", "chev")}</div>`)}
        ${this.group("フォント", html`
          <div class="rows">
            <div class="line2">${this.combo("name", "BIZ UDPゴシック", "フォント名")}${this.combo("size", "28", "フォント サイズ")}
              ${this.sq("grow", "拡大")}${this.sq("shrink", "縮小")}<span class="bar"></span>${this.sq("eraser", "書式のクリア")}</div>
            <div class="line2">
              <button class="sq on b">B</button><button class="sq i">I</button><button class="sq u">U</button>
              ${this.sq("shadow", "影")}${this.sq("strike", "取り消し線")}${this.wide("spacing", "文字の間隔")}${this.wide("caseAa", "文字種の変換")}
              <span class="bar"></span>${this.wide("marker", "蛍光ペン")}${this.wide("fontcolor", "フォントの色")}</div>
          </div>`, true)}
        ${this.group("段落", html`
          <div class="rows">
            <div class="line2 loose">${this.wide("bullets", "箇条書き")}${this.wide("numbers", "段落番号")}${this.sq("outdent", "インデントを減らす")}${this.sq("indent", "インデントを増やす")}${this.wide("linespace", "行間")}</div>
            <div class="line2">${this.sq("left", "左揃え")}${this.sq("center", "中央揃え", true)}${this.sq("right", "右揃え")}${this.sq("justify", "両端揃え")}${this.sq("distribute", "均等割り付け")}
              <span class="bar"></span>${this.wide("columns", "段組み")}</div>
          </div>
          <div class="stack">${this.small("textdir", "", "chev")}${this.small("aligntext", "", "chev")}${this.small("smartart", "", "chevOff")}</div>`, true)}
        ${this.group("", html`
          ${this.big("shapes", "w48", "図形", "")}
          <div class="host">${this.big("arrange", "w46 pressed", "配置", "")}<arrange-menu></arrange-menu></div>
          ${this.big("quick", "w60", "クイック", "スタイル")}
          <div class="stack">${this.small("fill", "図形の塗りつぶし", "chev")}${this.small("outline", "図形の枠線", "chev")}${this.small("effect", "図形の効果", "chev")}</div>`, true)}
        ${this.group("編集", html`
          <div class="stack inset">${this.small("find", "検索")}${this.small("replace", "置換", "chev")}${this.small("select", "選択", "chev")}</div>`)}
        ${this.group("アドイン", this.big("addin", "w48", "アド", "イン", false))}
      </div>
      <div class="quickbar">
        <div class="set">${this.quick("save", "保存")}${this.quick("undo", "元に戻す", true)}${this.quick("redo", "繰り返し")}${this.quick("paint", "塗り")}${this.quick("bullets", "箇条書き", true)}${this.quick("fontcolor", "フォントの色", true)}</div>
        ${this.combo("size", "28", "サイズ")}
        <div class="set">${this.quick("shapesS", "図形", true)}${this.quick("arrangeS", "配置")}${this.quick("heightS", "高さ")}${this.quick("penS", "編集")}${this.quick("zoomIn", "拡大")}${this.quick("zoomOut", "縮小")}${this.quick("more", "その他")}</div>
      </div>`;
  }
}

@customElement("scale-ruler")
class ScaleRuler extends LitElement {
  @property({ type: Number }) from = 16;
  @property({ type: Number }) to = 16;
  @property({ type: Boolean, reflect: true }) vertical = false;
  static styles = [sheet, css`
    :host { display: flex; background: #fff; color: #555; font-size: 13px; line-height: 14px; }
    .cell, .lead, .trail { display: flex; align-items: center; min-width: 0; min-height: 0; }
    .cell { position: relative; flex: 1; justify-content: space-evenly; padding: 0 2px; }
    .cell .tick { position: absolute; left: 0; }
    .lead { flex: 0 0 14px; justify-content: center; }
    .trail { flex: 0 0 13px; justify-content: space-between; padding-right: 4px; }
    .tick { width: 1px; height: 6px; background: #333; }
    .dot { width: 2px; height: 2px; background: #b5b5b5; }
    :host([vertical]), :host([vertical]) .cell, :host([vertical]) .trail { flex-direction: column; }
    :host([vertical]) .cell { padding: 2px 0; }
    :host([vertical]) .cell .tick { left: auto; top: 0; }
    :host([vertical]) .lead { display: none; }
    :host([vertical]) .trail { flex-basis: 7px; padding: 0; }
    :host([vertical]) .tick { width: 6px; height: 1px; }
    :host([vertical]) .num { writing-mode: vertical-rl; transform: rotate(180deg); }
  `];
  render() {
    const n = Array.from({ length: this.from + this.to + 1 }, (_, i) => Math.abs(i - this.from));
    return html`<span class="lead"><i class="dot"></i></span>
      ${n.map((v) => html`<span class="cell"><i class="tick"></i><i class="dot"></i><span class="num">${v}</span><i class="dot"></i></span>`)}
      <span class="trail"><i class="tick"></i><i class="dot"></i></span>`;
  }
}

@customElement("selected-shape")
class SelectedShape extends LitElement {
  @property() label = "";
  static styles = [sheet, css`
    :host { display: grid; place-items: center; width: 261px; height: 134px; background: #e7eef7; border: 1px solid #707070; }
    .label { color: #3a6fb3; font: 500 34px/40px "Noto Sans CJK JP", sans-serif; }
    .grip { position: absolute; width: 12px; height: 12px; margin: -6px; border: 2px solid #636363; border-radius: 50%; background: #fff; }
    .stem { position: absolute; left: 50%; bottom: 100%; width: 1px; height: 24px; background: #808080; }
    .turn { position: absolute; left: 50%; bottom: 100%; margin: 0 0 24px -14px; }
  `];
  render() {
    const spots = [[0, 0], [50, 0], [100, 0], [0, 50], [100, 50], [0, 100], [50, 100], [100, 100]];
    return html`<span class="label">${this.label}</span><span class="stem"></span>
      <svg class="turn" width="32" height="28" viewBox="0 0 32 28" aria-hidden="true">
        <path d="M18 21.500A8.500 8.500 0 1 1 22 13" fill="none" stroke="#5c5c5c" stroke-width="6.500"/>
        <path d="M18 21.500A8.500 8.500 0 1 1 22 13" fill="none" stroke="#fff" stroke-width="2.600"/>
        <path d="M14.500 13h15l-7 7z" fill="#fff" stroke="#5c5c5c" stroke-width="1.900"/>
        <path d="M20.700 11h2.600v4h-2.600z" fill="#fff"/>
      </svg>
      ${spots.map(([x, y]) => html`<span class="grip" style="left:${x}%;top:${y}%"></span>`)}`;
  }
}

@customElement("app-root")
class AppRoot extends LitElement {
  static styles = [sheet, css`
    :host {
      display: flex; min-height: 100vh; padding: 46px 37px 40px; background: #f1f1f1; box-sizing: border-box;
      font: 13px/18px "Noto Sans", "Noto Sans CJK JP", sans-serif; font-feature-settings: "palt";
    }
    .card { display: flex; flex: 1; flex-direction: column; min-width: 0; padding: 46px 372px 37px 154px; background: #fff; }
    h1 {
      margin: 0 -372px 46px -154px; color: #4d4d4d; text-align: center; font: 700 66px/96px "Noto Sans CJK JP", sans-serif;
      font-feature-settings: normal;
    }
    .window { display: flex; flex: 1; flex-direction: column; background: #e6e6e6; }
    .work { display: grid; flex: 1; grid-template-columns: 214px 1fr; padding-top: 4px; }
    .thumbs { display: flex; gap: 15px; padding: 15px 0 0 9px; border-right: 2px solid #cdcdcd; }
    .index { width: 9px; font-size: 16px; line-height: 18px; color: #d5593a; }
    .thumb { position: relative; width: 158px; height: 94px; background: #fff; border: 3px solid #b7472a; }
    .mini { position: absolute; display: grid; place-items: center; width: 35px; height: 18px; background: #e7eef7; }
    .mini::after { content: ""; width: 4px; height: 4px; border-radius: 50%; background: #93a9d3; }
    .m1 { left: 15px; top: 12px; } .m2 { left: 57px; top: 33px; } .m3 { left: 19px; top: 58px; }
    .edit { display: grid; grid-template: 14px 1fr / 15px 1fr; column-gap: 46px; row-gap: 27px; padding: 3px 17px 0 7px; }
    .across { grid-column: 2; margin: 0 2px; }
    .slide { position: relative; background: #fff; border: 2px solid #c6c6c6; border-bottom: 0; }
    selected-shape { position: absolute; }
    .s1 { left: 104px; top: 81px; } .s2 { left: 411px; top: 227px; } .s3 { left: 134px; top: 416px; }
  `];
  render() {
    return html`<main class="card">
      <h1>図形を等間隔に整列する方法</h1>
      <div class="window">
        <office-ribbon></office-ribbon>
        <div class="work">
          <aside class="thumbs"><span class="index">1</span>
            <div class="thumb"><i class="mini m1"></i><i class="mini m2"></i><i class="mini m3"></i></div></aside>
          <div class="edit">
            <scale-ruler class="across" from="16" to="16"></scale-ruler>
            <scale-ruler vertical from="9" to="8"></scale-ruler>
            <div class="slide">
              <selected-shape class="s1" label="①"></selected-shape>
              <selected-shape class="s2" label="②"></selected-shape>
              <selected-shape class="s3" label="③"></selected-shape>
            </div>
          </div>
        </div>
      </div>
    </main>`;
  }
}
